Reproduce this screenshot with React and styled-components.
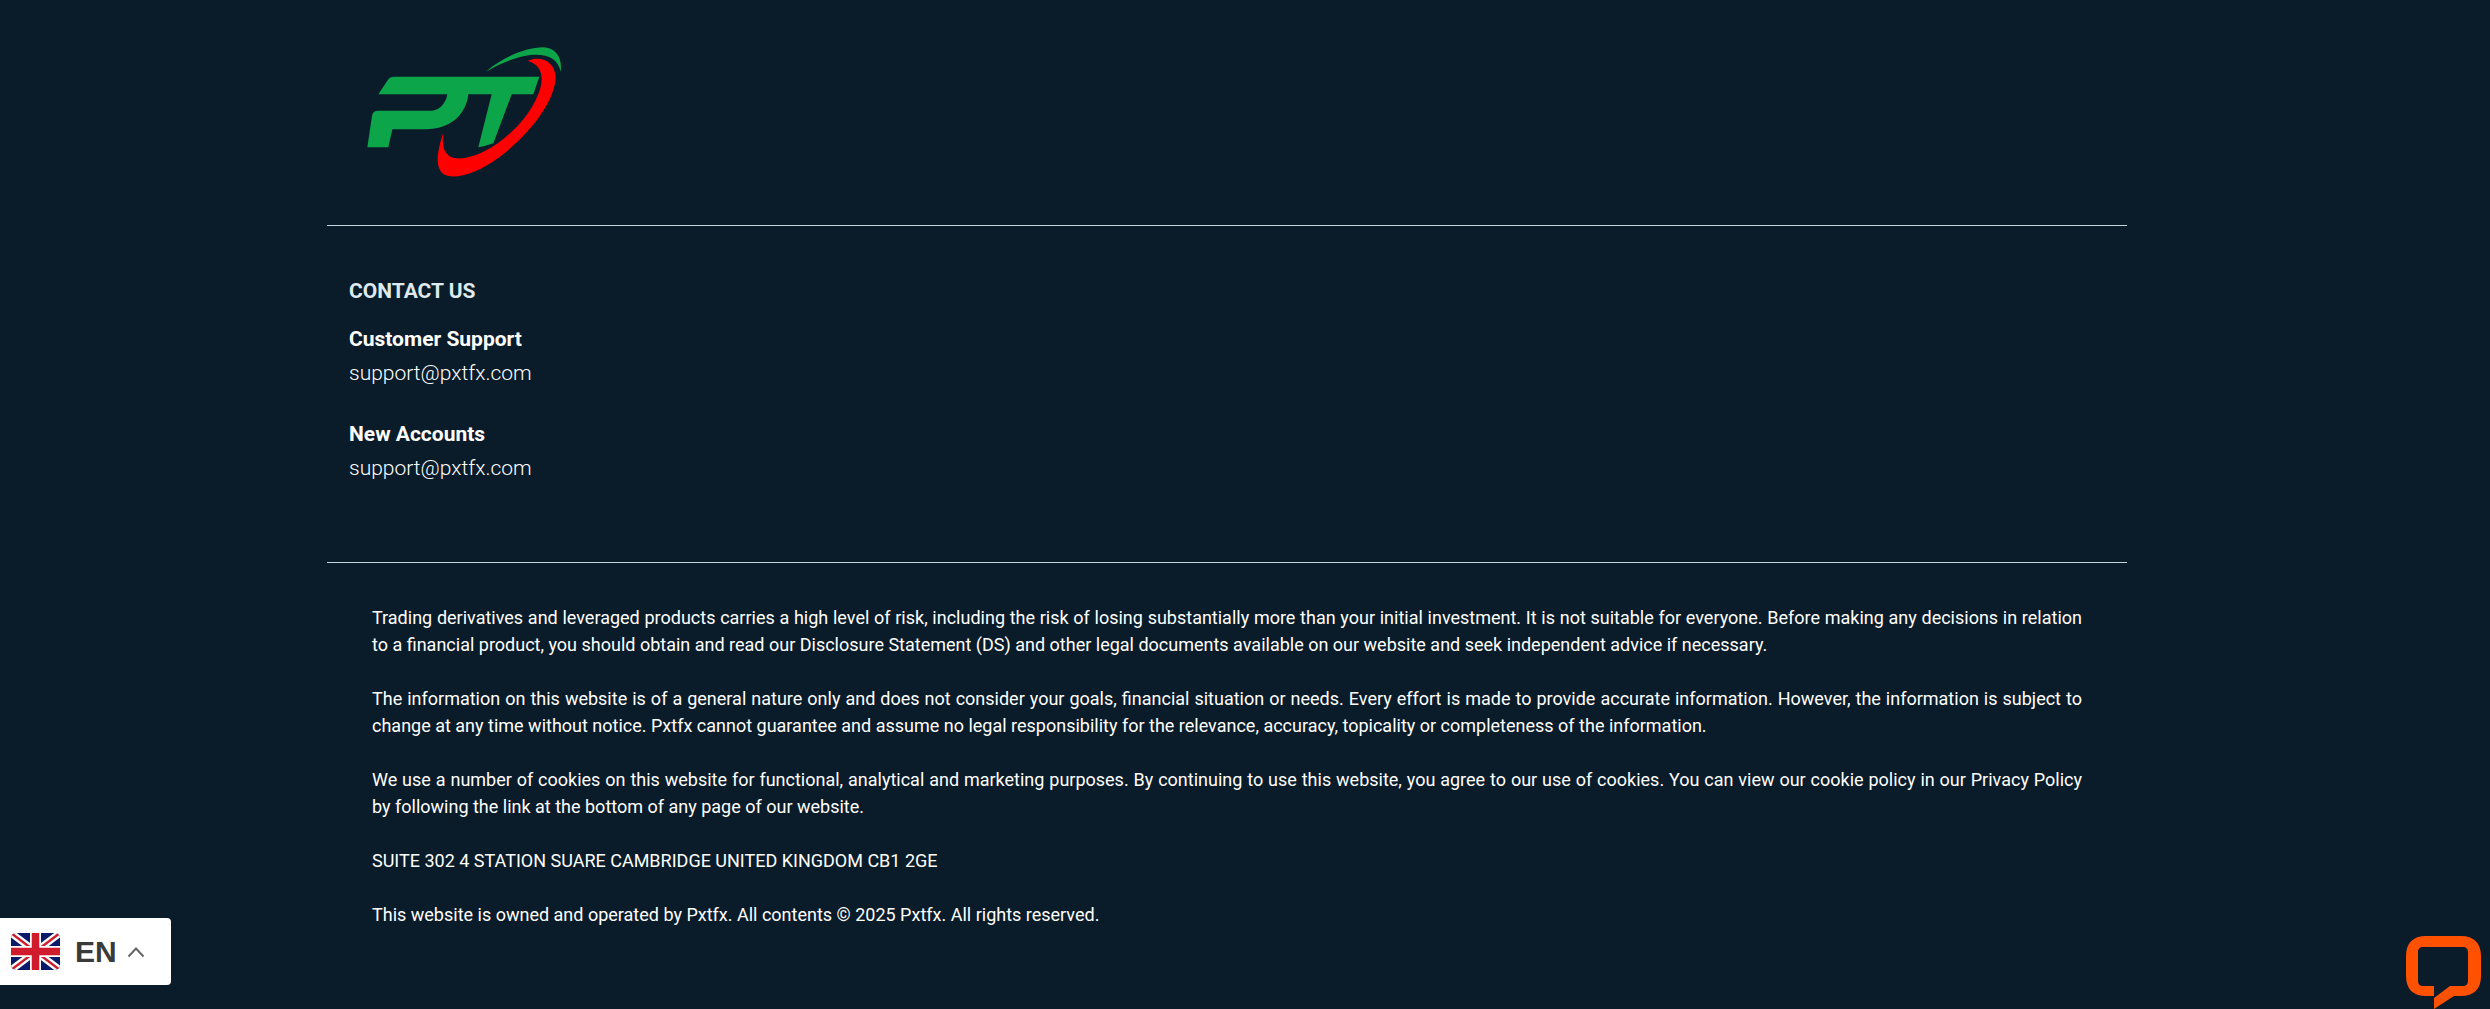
import React from "react";
import styled, { createGlobalStyle } from "styled-components";

const Global = createGlobalStyle`
  html, body { margin: 0; padding: 0; background: #0a1c2a; }
  body { font-family: Roboto, "Liberation Sans", sans-serif; color: #fff; overflow: hidden; }
`;

const Page = styled.div`
  height: 1009px;
  background: #0a1c2a;
  position: relative;
  overflow: hidden;
`;
const Footer = styled.footer`
  width: 1800px;
  margin-left: 327px;
`;
const LogoRow = styled.div`
  height: 225px;
  padding: 40px 0 0 33px;
  box-sizing: border-box;
`;
const Rule = styled.hr`
  margin: 0;
  border: 0;
  height: 1px;
  background: #c5d5dc;
`;
const Contact = styled.section`
  height: 336px;
  padding: 53px 0 0 22px;
  box-sizing: border-box;
`;
const Title = styled.h3`
  margin: 0 0 21px;
  font-size: 21px;
  line-height: 24px;
  font-weight: 700;
  color: #dfe9ee;
`;
const Group = styled.div`
  margin-bottom: 27px;
`;
const Label = styled.div`
  font-size: 21px;
  line-height: 30px;
  font-weight: 700;
`;
const Mail = styled.div`
  font-size: 21px;
  line-height: 38px;
  font-weight: 300;
`;
const Legal = styled.section`
  padding: 41px 45px 0 45px;
`;
const Para = styled.p`
  margin: 0 0 27px;
  font-size: 18px;
  line-height: 27px;
  font-weight: 400;
  color: #fff;
  text-align: justify;
`;
const Lang = styled.div`
  position: absolute;
  left: 0;
  top: 918px;
  width: 171px;
  height: 67px;
  background: #fff;
  border-radius: 0 4px 4px 0;
  display: flex;
  align-items: center;
  padding-left: 11px;
  box-sizing: border-box;
`;
const LangText = styled.span`
  font-family: "Liberation Sans", Arial, sans-serif;
  font-weight: 700;
  font-size: 30px;
  color: #3a3a3a;
  margin-left: 15px;
`;
const Chevron = styled.svg`
  margin-left: 10px;
`;
const Chat = styled.svg`
  position: absolute;
  left: 2406px;
  top: 936px;
`;

const Logo = () => (
  <svg width="210" height="145" viewBox="0 0 630 435">
    <path fill="#0ca54a" d="M100 110 H538 L520 163 H455 L400 310 Q378 318 355 322 L395 163 H325 C318 222 275 268 195 268 H97 L85 322 H22 L36 228 Q38 212 55 212 H215 C238 212 258 190 262 163 H55 L85 118 Q90 110 100 110 Z" />
    <path fill="#fe0000" d="M503 62 C545 45 582 65 586 105 C592 170 520 275 420 350 C360 395 300 415 265 408 C230 400 222 360 250 278 C245 320 252 350 290 355 C350 360 440 305 500 225 C550 155 568 82 503 62 Z" />
    <path fill="#0ca54a" d="M378 95 C430 50 500 22 550 22 C585 24 608 50 602 95 C595 55 560 40 510 45 C465 52 420 70 378 95 Z" />
  </svg>
);

const Flag = () => (
  <svg width="49" height="37" viewBox="0 0 49 37">
    <defs><clipPath id="r"><rect width="49" height="37" rx="5" /></clipPath></defs>
    <g clipPath="url(#r)">
      <rect width="49" height="37" fill="#0a1a6b" />
      <path d="M0 0 L49 37 M49 0 L0 37" stroke="#fff" strokeWidth="7" />
      <path d="M0 0 L49 37 M49 0 L0 37" stroke="#cf1b2b" strokeWidth="2.4" />
      <path d="M24.5 0 V37 M0 18.5 H49" stroke="#fff" strokeWidth="11" />
      <path d="M24.5 0 V37 M0 18.5 H49" stroke="#cf1b2b" strokeWidth="7.5" />
    </g>
  </svg>
);

export default function App() {
  return (
    <Page>
      <Global />
      <Footer>
        <LogoRow><Logo /></LogoRow>
        <Rule />
        <Contact>
          <Title>CONTACT US</Title>
          <Group>
            <Label>Customer Support</Label>
            <Mail>support@pxtfx.com</Mail>
          </Group>
          <Group>
            <Label>New Accounts</Label>
            <Mail>support@pxtfx.com</Mail>
          </Group>
        </Contact>
        <Rule />
        <Legal>
          <Para>Trading derivatives and leveraged products carries a high level of risk, including the risk of losing substantially more than your initial investment. It is not suitable for everyone. Before making any decisions in relation to a financial product, you should obtain and read our Disclosure Statement (DS) and other legal documents available on our website and seek independent advice if necessary.</Para>
          <Para>The information on this website is of a general nature only and does not consider your goals, financial situation or needs. Every effort is made to provide accurate information. However, the information is subject to change at any time without notice. Pxtfx cannot guarantee and assume no legal responsibility for the relevance, accuracy, topicality or completeness of the information.</Para>
          <Para>We use a number of cookies on this website for functional, analytical and marketing purposes. By continuing to use this website, you agree to our use of cookies. You can view our cookie policy in our Privacy Policy by following the link at the bottom of any page of our website.</Para>
          <Para>SUITE 302 4 STATION SUARE CAMBRIDGE UNITED KINGDOM CB1 2GE</Para>
          <Para>This website is owned and operated by Pxtfx. All contents © 2025 Pxtfx. All rights reserved.</Para>
        </Legal>
      </Footer>
      <Lang>
        <Flag />
        <LangText>EN</LangText>
        <Chevron width="18" height="12" viewBox="0 0 18 12"><path d="M1.5 10.5 L9 2.5 L16.5 10.5" fill="none" stroke="#666" strokeWidth="2" /></Chevron>
      </Lang>
      <Chat width="75" height="73" viewBox="0 0 75 73">
        <path fill="#ff5100" fillRule="evenodd" d="M20 0 H55 C68 0 75 7 75 20 V40 C75 53 68 60 55 60 H48 L28 73 V60 H20 C7 60 0 53 0 40 V20 C0 7 7 0 20 0 Z M17 11 C14 11 12 13 12 16 V45 C12 48 14 50 17 50 H28 V62 L44 50 H57 C60 50 62 48 62 45 V16 C62 13 60 11 57 11 Z" />
      </Chat>
    </Page>
  );
}
